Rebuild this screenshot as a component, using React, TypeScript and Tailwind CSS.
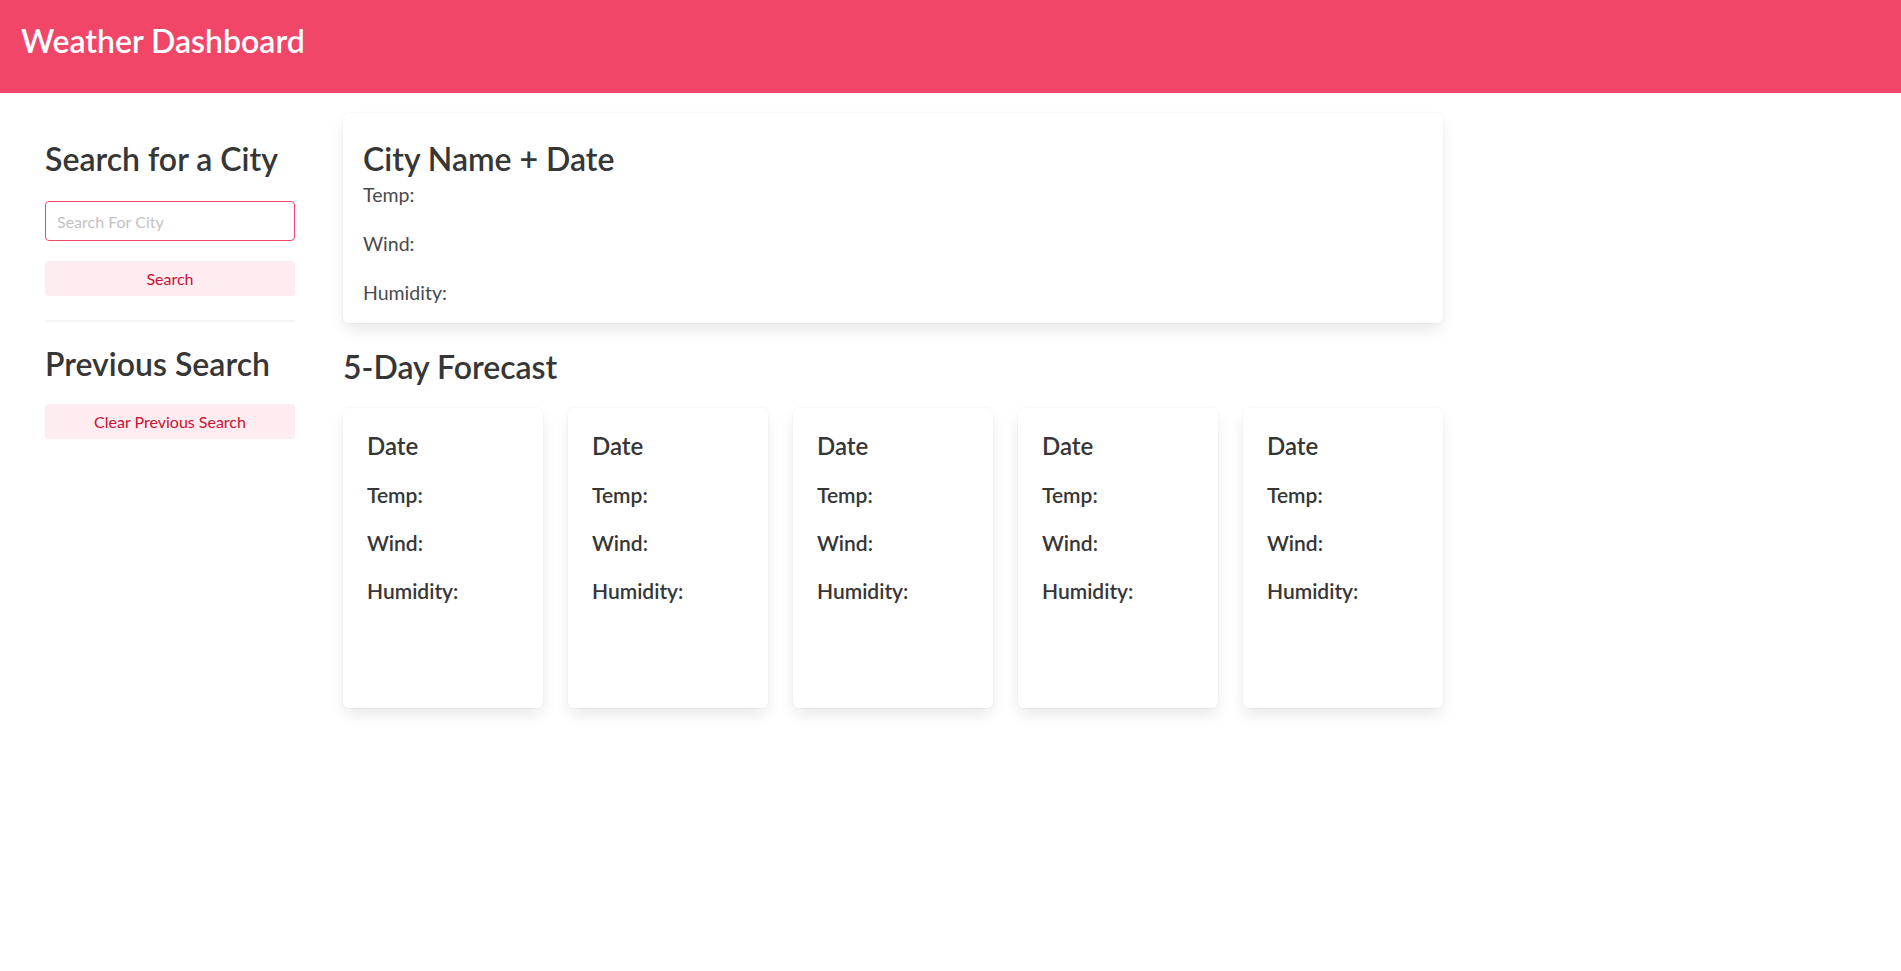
import React from "react";

const font = "font-['Lato','Open_Sans',sans-serif]";

function ForecastCard() {
  return (
    <div className="w-[200px] h-[300px] shrink-0 bg-white rounded-[6px] shadow-[0_8px_16px_-2px_rgba(10,10,10,0.1),0_0_0_1px_rgba(10,10,10,0.02)] px-[24px] pt-[23px] text-[#363636] font-semibold">
      <div className="text-[24px] leading-[30px] h-[30px]">Date</div>
      <div className="mt-[19px] text-[21px] leading-[30px] h-[30px]">Temp:</div>
      <div className="mt-[18px] text-[21px] leading-[30px] h-[30px]">Wind:</div>
      <div className="mt-[18px] text-[21px] leading-[30px] h-[30px]">Humidity:</div>
    </div>
  );
}

export default function App() {
  return (
    <div className={`${font} min-h-[971px] bg-white`}>
      <header className="h-[93px] bg-[#f14668] px-[21px] pt-[23px]">
        <h1 className="text-white text-[32px] font-semibold leading-[36px]">Weather Dashboard</h1>
      </header>
      <div className="flex">
        <aside className="ml-[45px] w-[250px] shrink-0 pt-[48px]">
          <h2 className="text-[32px] leading-[36px] h-[36px] font-semibold text-[#363636] whitespace-nowrap">Search for a City</h2>
          <input
            type="text"
            placeholder="Search For City"
            className="mt-[24px] block w-full h-[40px] rounded-[4px] border border-[#f14668] px-[11px] text-[16px] text-[#363636] placeholder:text-[#c2c2c2] outline-none"
          />
          <button className="mt-[20px] block w-full h-[35px] rounded-[4px] bg-[#feecf0] text-[#cc0f35] text-[16px]">Search</button>
          <hr className="mt-[24px] h-[2px] border-0 bg-[#f5f5f5]" />
          <h2 className="mt-[24px] text-[32px] leading-[36px] h-[36px] font-semibold text-[#363636] whitespace-nowrap">Previous Search</h2>
          <button className="mt-[22px] block w-full h-[35px] rounded-[4px] bg-[#feecf0] text-[#cc0f35] text-[16px]">Clear Previous Search</button>
        </aside>
        <main className="ml-[48px] w-[1100px] shrink-0 pt-[20px]">
          <section className="h-[210px] bg-white rounded-[6px] shadow-[0_8px_16px_-2px_rgba(10,10,10,0.1),0_0_0_1px_rgba(10,10,10,0.02)] pl-[20px] pt-[28px]">
            <h2 className="text-[32px] leading-[36px] h-[36px] font-semibold text-[#363636]">City Name + Date</h2>
            <p className="mt-[4px] text-[19.5px] leading-[27px] h-[27px] text-[#4a4a4a]">Temp:</p>
            <p className="mt-[22px] text-[19.5px] leading-[27px] h-[27px] text-[#4a4a4a]">Wind:</p>
            <p className="mt-[22px] text-[19.5px] leading-[27px] h-[27px] text-[#4a4a4a]">Humidity:</p>
          </section>
          <h2 className="mt-[26px] text-[32px] leading-[36px] h-[36px] font-semibold text-[#363636]">5-Day Forecast</h2>
          <div className="mt-[23px] flex gap-[25px]">
            <ForecastCard />
            <ForecastCard />
            <ForecastCard />
            <ForecastCard />
            <ForecastCard />
          </div>
        </main>
      </div>
    </div>
  );
}
